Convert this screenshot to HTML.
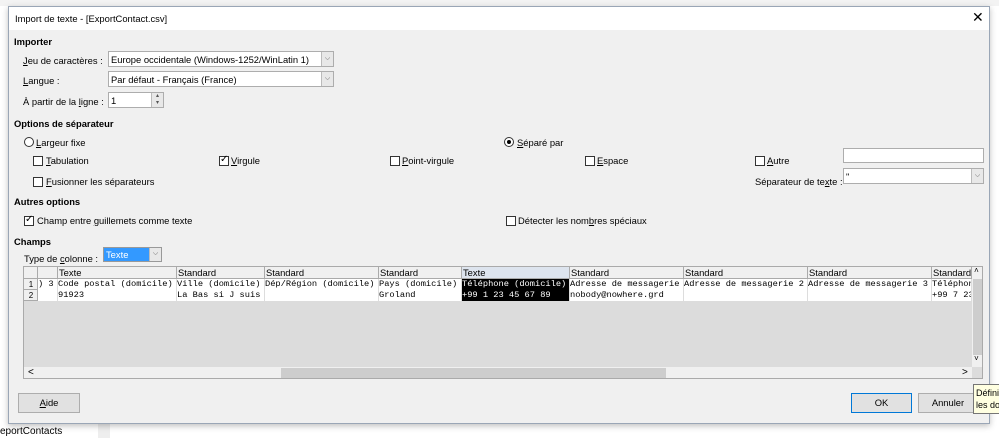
<!DOCTYPE html>
<html><head><meta charset="utf-8"><style>
*{box-sizing:border-box;margin:0;padding:0}
body{width:999px;height:438px;overflow:hidden;background:#fff;font-family:"Liberation Sans",sans-serif;font-size:9.4px;color:#000;position:relative}
.a{position:absolute;white-space:nowrap}
.dlg{position:absolute;left:8px;top:6px;width:982px;height:418px;background:#f0f0f0;border:1px solid #9aa6b6;box-shadow:0 2px 6px rgba(0,0,0,.25)}
.tb{position:absolute;left:0;top:0;width:100%;height:23px;background:#fff}
.b{font-weight:bold}
.in{position:absolute;background:#fff;border:1px solid #adadad}
.cb{position:absolute;width:10px;height:10px;border:1px solid #333;background:#fff}
.dd{position:absolute;right:0;top:0;width:12px;height:100%;background:#e8e8e8;border-left:1px solid #bbb;font-size:7px;text-align:center;line-height:14px;color:#555}
.g{position:absolute;left:23px;top:266px;width:960px;height:113px;background:#dcdcdc;border:1px solid #aaa;font-family:"Liberation Mono",monospace;font-size:8.7px;overflow:hidden}
.h{position:absolute;top:0;height:12px;background:#f0f0f0;border-right:1px solid #aaa;border-bottom:1px solid #aaa;font-family:"Liberation Sans",sans-serif;font-size:9.4px;padding-left:1px;line-height:12px;white-space:nowrap;overflow:hidden}
.c{position:absolute;height:11px;background:#fff;border-right:1px solid #ddd;line-height:11px;padding-left:0;overflow:hidden;white-space:nowrap}
.btn{position:absolute;height:20px;border:1px solid #adadad;background:#e1e1e1;text-align:center;line-height:18px;font-size:9.4px}
u{text-decoration:underline}
</style></head><body>
<div class="a" style="left:0;top:0;width:999px;height:6px;background:#f3f3f3"></div>
<div class="a" style="left:0;top:6px;width:8px;height:432px;background:#fff"></div>
<div class="a" style="left:0;top:426px;font-size:10px">eportContacts</div>
<div class="a" style="left:98px;top:424px;width:12px;height:14px;background:#eee"></div>
<div class="dlg">
<div class="tb"><span class="a" style="left:6px;top:6px">Import de texte - [ExportContact.csv]</span><span class="a" style="left:963px;top:2px;font-size:14px">✕</span></div>
<span class="a b" style="left:5px;top:29px">Importer</span>
<span class="a" style="left:14px;top:48px"><u>J</u>eu de caractères :</span>
<div class="in" style="left:99px;top:44px;width:226px;height:16px"><span class="a" style="left:2px;top:2px">Europe occidentale (Windows-1252/WinLatin 1)</span><div class="dd">⌵</div></div>
<span class="a" style="left:14px;top:68px"><u>L</u>angue :</span>
<div class="in" style="left:99px;top:64px;width:226px;height:16px"><span class="a" style="left:2px;top:2px">Par défaut - Français (France)</span><div class="dd">⌵</div></div>
<span class="a" style="left:14px;top:89px">À partir de la <u>l</u>igne :</span>
<div class="in" style="left:99px;top:85px;width:56px;height:16px"><span class="a" style="left:2px;top:2px">1</span><div class="dd" style="font-size:6px;line-height:7px">▴<br>▾</div></div>
<span class="a b" style="left:5px;top:111px">Options de séparateur</span>
<div class="a" style="left:15px;top:130px;width:10px;height:10px;border:1px solid #333;border-radius:50%;background:#fff"></div>
<span class="a" style="left:27px;top:130px"><u>L</u>argeur fixe</span>
<div class="a" style="left:495px;top:130px;width:10px;height:10px;border:1px solid #333;border-radius:50%;background:#fff"><div style="position:absolute;left:2px;top:2px;width:4px;height:4px;border-radius:50%;background:#000"></div></div>
<span class="a" style="left:508px;top:130px"><u>S</u>éparé par</span>
<div class="cb" style="left:24px;top:149px"></div><span class="a" style="left:37px;top:148px"><u>T</u>abulation</span>
<div class="cb" style="left:210px;top:149px"><span class="a" style="left:0;top:-3px;font-size:10px">✓</span></div><span class="a" style="left:222px;top:148px"><u>V</u>irgule</span>
<div class="cb" style="left:381px;top:149px"></div><span class="a" style="left:393px;top:148px"><u>P</u>oint-virgule</span>
<div class="cb" style="left:576px;top:149px"></div><span class="a" style="left:588px;top:148px"><u>E</u>space</span>
<div class="cb" style="left:746px;top:149px"></div><span class="a" style="left:758px;top:148px"><u>A</u>utre</span>
<div class="in" style="left:834px;top:141px;width:141px;height:15px"></div>
<div class="cb" style="left:24px;top:170px"></div><span class="a" style="left:37px;top:169px"><u>F</u>usionner les séparateurs</span>
<span class="a" style="left:746px;top:169px">Séparateur de te<u>x</u>te :</span>
<div class="in" style="left:834px;top:161px;width:141px;height:16px"><span class="a" style="left:2px;top:2px">"</span><div class="dd">⌵</div></div>
<span class="a b" style="left:5px;top:189px">Autres options</span>
<div class="cb" style="left:15px;top:209px"><span class="a" style="left:0;top:-3px;font-size:10px">✓</span></div><span class="a" style="left:28px;top:208px">Champ entre <u>g</u>uillemets comme texte</span>
<div class="cb" style="left:497px;top:209px"></div><span class="a" style="left:509px;top:208px">Détecter les nom<u>b</u>res spéciaux</span>
<span class="a b" style="left:5px;top:229px">Champs</span>
<span class="a" style="left:15px;top:246px">Type de <u>c</u>olonne :</span>
<div class="in" style="left:94px;top:240px;width:59px;height:15px;border-color:#999"><div class="a" style="left:0;top:0;width:45px;height:13px;background:#3399ff;color:#fff;padding:1px 2px">Texte</div><div class="dd" style="line-height:12px">⌵</div></div>
</div>
<div class="g">
<div class="h" style="left:0;width:14px"></div><div class="h" style="left:14px;width:20px"></div>
<div class="h" style="left:34px;width:119px">Texte</div><div class="h" style="left:153px;width:88px">Standard</div><div class="h" style="left:241px;width:114px">Standard</div><div class="h" style="left:355px;width:83px">Standard</div><div class="h" style="left:438px;width:108px;background:#dde4ee">Texte</div><div class="h" style="left:546px;width:114px">Standard</div><div class="h" style="left:660px;width:124px">Standard</div><div class="h" style="left:784px;width:124px">Standard</div><div class="h" style="left:908px;width:40px">Standard</div>
<div class="h" style="left:0;top:12px;width:14px;height:11px;text-align:center;font-size:8px;line-height:11px">1</div>
<div class="h" style="left:0;top:23px;width:14px;height:11px;text-align:center;font-size:8px;line-height:11px">2</div>
<div class="c" style="left:14px;top:12px;width:20px">) 3</div><div class="c" style="left:34px;top:12px;width:119px">Code postal (domicile)</div><div class="c" style="left:153px;top:12px;width:88px">Ville (domicile)</div><div class="c" style="left:241px;top:12px;width:114px">Dép/Région (domicile)</div><div class="c" style="left:355px;top:12px;width:83px">Pays (domicile)</div><div class="c" style="left:438px;top:12px;width:108px;background:#000;color:#fff">Téléphone (domicile)</div><div class="c" style="left:546px;top:12px;width:114px">Adresse de messagerie</div><div class="c" style="left:660px;top:12px;width:124px">Adresse de messagerie 2</div><div class="c" style="left:784px;top:12px;width:124px">Adresse de messagerie 3</div><div class="c" style="left:908px;top:12px;width:40px">Téléphone</div>
<div class="c" style="left:14px;top:23px;width:20px"></div><div class="c" style="left:34px;top:23px;width:119px">91923</div><div class="c" style="left:153px;top:23px;width:88px">La Bas si J suis</div><div class="c" style="left:241px;top:23px;width:114px"></div><div class="c" style="left:355px;top:23px;width:83px">Groland</div><div class="c" style="left:438px;top:23px;width:108px;background:#000;color:#fff">+99 1 23 45 67 89</div><div class="c" style="left:546px;top:23px;width:114px">nobody@nowhere.grd</div><div class="c" style="left:660px;top:23px;width:124px"></div><div class="c" style="left:784px;top:23px;width:124px"></div><div class="c" style="left:908px;top:23px;width:40px">+99 7 23</div>
<div class="a" style="left:948px;top:0;width:11px;height:100px;background:#f0f0f0"><div style="position:absolute;left:1px;top:12px;width:9px;height:76px;background:#cdcdcd"></div><span class="a" style="left:2px;top:0;font-size:8px">˄</span><span class="a" style="left:2px;top:88px;font-size:8px">˅</span></div>
<div class="a" style="left:0;top:100px;width:948px;height:12px;background:#f0f0f0"><span class="a" style="left:4px;top:0;font-family:'Liberation Sans';font-size:10px">&lt;</span><div class="a" style="left:257px;top:1px;width:385px;height:10px;background:#cdcdcd"></div><span class="a" style="left:938px;top:0;font-family:'Liberation Sans';font-size:10px">&gt;</span></div>
</div>
<div class="btn" style="left:18px;top:393px;width:62px"><u>A</u>ide</div>
<div class="btn" style="left:851px;top:393px;width:61px;border:1px solid #0078d7">OK</div>
<div class="btn" style="left:918px;top:393px;width:60px">Annuler</div>
<div class="a" style="left:973px;top:384px;width:30px;height:30px;background:#ffffe1;border:1px solid #767676;padding:2px;line-height:12px;font-size:9px">Défini<br>les do</div>
</body></html>
